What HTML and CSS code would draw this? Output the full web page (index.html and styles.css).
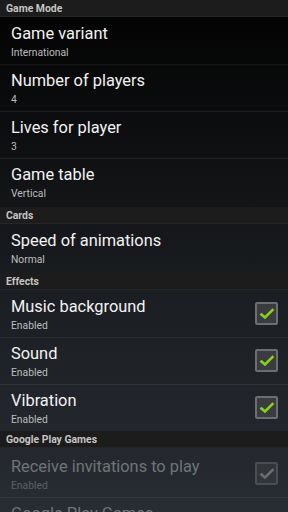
FILE: index.html
```html
<!DOCTYPE html>
<html>
<head>
<meta charset="utf-8">
<link rel="stylesheet" href="styles.css">
</head>
<body>
<div class="screen">
  <div class="cat">Game Mode</div>
  <div class="item">
    <div class="text"><div class="title">Game variant</div><div class="sum">International</div></div>
  </div>
  <div class="item sep">
    <div class="text"><div class="title">Number of players</div><div class="sum">4</div></div>
  </div>
  <div class="item sep">
    <div class="text"><div class="title">Lives for player</div><div class="sum">3</div></div>
  </div>
  <div class="item sep last">
    <div class="text"><div class="title">Game table</div><div class="sum">Vertical</div></div>
  </div>

  <div class="cat">Cards</div>
  <div class="item last">
    <div class="text"><div class="title">Speed of animations</div><div class="sum">Normal</div></div>
  </div>

  <div class="cat">Effects</div>
  <div class="item">
    <div class="text"><div class="title">Music background</div><div class="sum">Enabled</div></div>
    <div class="check"><svg viewBox="0 0 16 16" width="16" height="16"><path d="M2.5 8.5 L6 11.5 L13.5 4" fill="none" stroke="#86d21c" stroke-width="2.6" stroke-linecap="square"/></svg></div>
  </div>
  <div class="item sep">
    <div class="text"><div class="title">Sound</div><div class="sum">Enabled</div></div>
    <div class="check"><svg viewBox="0 0 16 16" width="16" height="16"><path d="M2.5 8.5 L6 11.5 L13.5 4" fill="none" stroke="#86d21c" stroke-width="2.6" stroke-linecap="square"/></svg></div>
  </div>
  <div class="item sep">
    <div class="text"><div class="title">Vibration</div><div class="sum">Enabled</div></div>
    <div class="check"><svg viewBox="0 0 16 16" width="16" height="16"><path d="M2.5 8.5 L6 11.5 L13.5 4" fill="none" stroke="#86d21c" stroke-width="2.6" stroke-linecap="square"/></svg></div>
  </div>

  <div class="cat">Google Play Games</div>
  <div class="item disabled first-gpg">
    <div class="text"><div class="title">Receive invitations to play</div><div class="sum">Enabled</div></div>
    <div class="check"><svg viewBox="0 0 16 16" width="16" height="16"><path d="M2.5 8.5 L6 11.5 L13.5 4" fill="none" stroke="#6a6d71" stroke-width="2.6" stroke-linecap="square"/></svg></div>
  </div>
  <div class="item sep disabled tail">
    <div class="text"><div class="title">Google Play Games</div></div>
  </div>
</div>
</body>
</html>
```

FILE: styles.css
```css
html, body {
  margin: 0;
  padding: 0;
}
body {
  width: 288px;
  height: 512px;
  overflow: hidden;
  font-family: Roboto, "Liberation Sans", sans-serif;
  background: linear-gradient(to bottom, #020202 0px, #0c0d0e 120px, #1b1e22 300px, #282c33 512px);
}
.screen {
  display: flex;
  flex-direction: column;
}
.cat {
  height: 17px;
  box-sizing: border-box;
  padding: 3px 0 0 6px;
  font-size: 10.4px;
  line-height: 11px;
  font-weight: bold;
  color: #c4c4c4;
  background: #1c1c1c;
  border-bottom: 1px solid #262626;
}
.item {
  height: 47px;
  box-sizing: border-box;
  padding: 7px 10px 0 11px;
  display: flex;
  align-items: flex-start;
  justify-content: space-between;
}
.item.sep {
  border-top: 1px solid rgba(255, 255, 255, 0.07);
  padding-top: 6px;
}
.item.last {
  height: 49px;
}
.item.first-gpg {
  height: 49px;
  padding-top: 9px;
}
.item.tail {
  height: 30px;
}
.title {
  font-size: 16.4px;
  line-height: 20px;
  color: #f2f2f2;
  white-space: nowrap;
}
.sum {
  margin-top: 2px;
  font-size: 10.3px;
  line-height: 13px;
  color: #bdbdbd;
}
.check {
  margin-top: 5px;
  width: 23px;
  height: 23px;
  box-sizing: border-box;
  border: 2px solid #6c6e72;
  border-radius: 2px;
  background: #3a3c40;
  display: flex;
  align-items: center;
  justify-content: center;
}
.disabled .title {
  color: #70747a;
}
.disabled .sum {
  color: #5c6066;
}
.disabled .check {
  border-color: #4a4d52;
  background: #32353a;
}
```
